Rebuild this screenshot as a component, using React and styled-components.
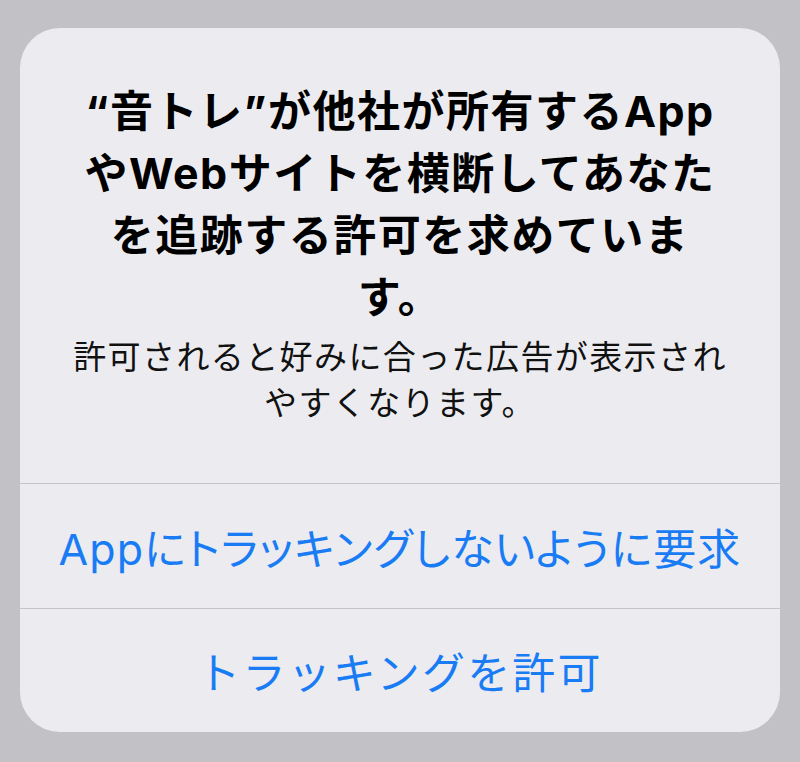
import React from "react";
import styled, { createGlobalStyle } from "styled-components";

const GlobalStyle = createGlobalStyle`
  html, body {
    margin: 0;
    padding: 0;
    background: #c2c1c6;
  }
  body {
    font-family: "Inter", "Noto Sans CJK JP", sans-serif;
    -webkit-font-smoothing: antialiased;
  }
`;

const Screen = styled.div`
  width: 800px;
  height: 762px;
  box-sizing: border-box;
  padding: 28px 20px 30px;
  display: flex;
  flex-direction: column;
`;

const Alert = styled.div`
  flex: 1;
  display: flex;
  flex-direction: column;
  background: #ececf0;
  border-radius: 40px;
  overflow: hidden;
`;

const Body = styled.div`
  padding: 52px 20px 57px;
  display: flex;
  flex-direction: column;
  align-items: center;
  text-align: center;
`;

const Title = styled.h1`
  margin: 0;
  font-family: "Inter", "Noto Sans CJK JP", sans-serif;
  font-size: 43px;
  line-height: 62px;
  font-weight: 700;
  letter-spacing: 1.5px;
  color: #000;
`;

const Message = styled.p`
  margin: 6px 0 0;
  font-family: "Inter", "Noto Sans CJK JP", sans-serif;
  font-size: 33px;
  line-height: 46px;
  font-weight: 400;
  color: #111;
  letter-spacing: 1.4px;
`;

const Actions = styled.div`
  display: flex;
  flex-direction: column;
  flex: 1;
`;

const ActionButton = styled.button`
  flex: 1;
  height: 124px;
  display: flex;
  align-items: center;
  justify-content: center;
  border: 0;
  border-top: 1px solid #c5c5c9;
  background: transparent;
  padding: 0;
  margin: 0;
  font-family: "Inter", "Noto Sans CJK JP", sans-serif;
  font-size: 43px;
  font-weight: 400;
  color: #1a7cf5;
  letter-spacing: ${(p) => p.$spacing}px;
  font-feature-settings: ${(p) => (p.$tight ? '"palt"' : "normal")};
  cursor: pointer;
`;

const titleLines = [
  "“音トレ”が他社が所有するApp",
  "やWebサイトを横断してあなた",
  "を追跡する許可を求めていま",
  "す。",
];

const messageLines = ["許可されると好みに合った広告が表示され", "やすくなります。"];

const Lines = ({ lines }) =>
  lines.map((line, i) => (
    <React.Fragment key={i}>
      {line}
      {i < lines.length - 1 && <br />}
    </React.Fragment>
  ));

export default function App() {
  return (
    <>
      <GlobalStyle />
      <Screen>
        <Alert>
          <Body>
            <Title>
              <Lines lines={titleLines} />
            </Title>
            <Message>
              <Lines lines={messageLines} />
            </Message>
          </Body>
          <Actions>
            <ActionButton $tight $spacing={1.1}>
              Appにトラッキングしないように要求
            </ActionButton>
            <ActionButton $spacing={2.2}>トラッキングを許可</ActionButton>
          </Actions>
        </Alert>
      </Screen>
    </>
  );
}
